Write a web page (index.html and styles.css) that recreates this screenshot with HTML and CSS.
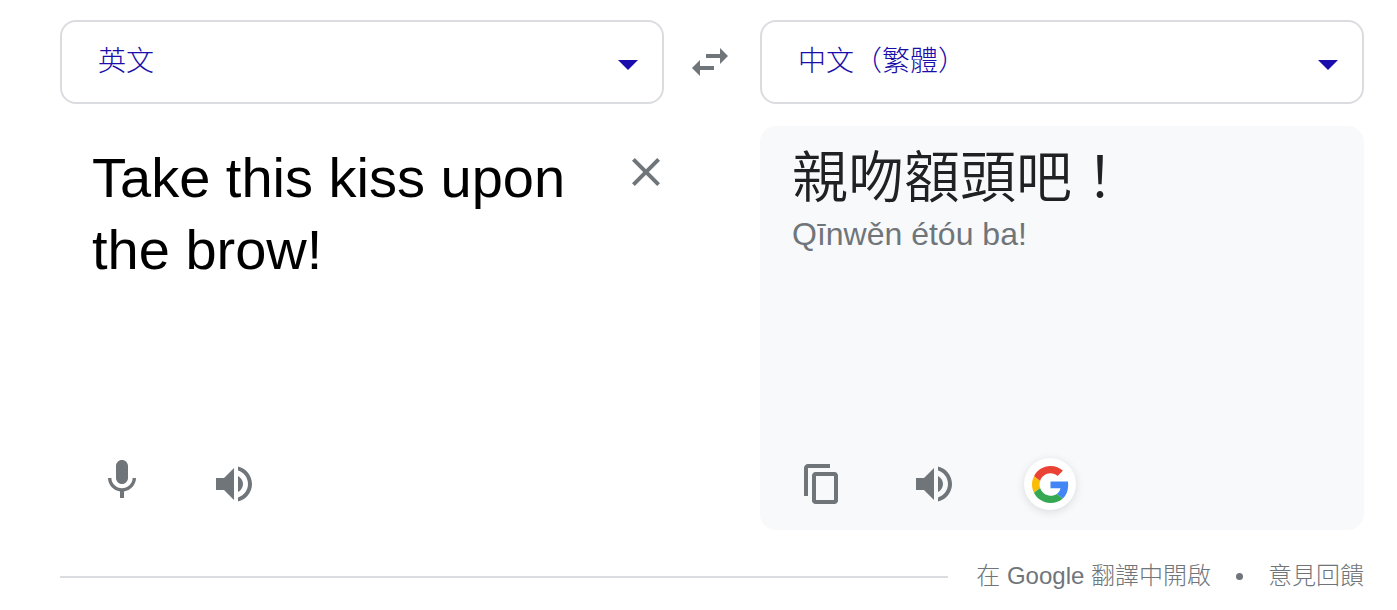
FILE: index.html
```html
<!DOCTYPE html>
<html lang="zh-Hant">
<head>
<meta charset="utf-8">
<meta name="viewport" content="width=device-width, initial-scale=1">
<title>翻譯</title>
<link rel="stylesheet" href="styles.css">
</head>
<body>
<main class="translator">
  <div class="columns">
    <div class="language">
      <select class="language-select" aria-label="來源語言"><option>英文</option></select>
    </div>
    <button class="icon-button swap" type="button" aria-label="交換語言">
      <svg class="icon" viewBox="0 0 24 24"><path d="M6.99 11L3 15l3.99 4v-3H14v-2H6.99v-3zM21 9l-3.99-4v3H10v2h7.01v3L21 9z"/></svg>
    </button>
    <div class="language">
      <select class="language-select" aria-label="目標語言"><option>中文（繁體）</option></select>
    </div>

    <section class="panel source">
      <div class="entry">
        <textarea class="source-text" aria-label="原文" rows="2" spellcheck="false">Take this kiss upon the brow!</textarea>
        <button class="icon-button clear" type="button" aria-label="清除">
          <svg class="icon" viewBox="0 0 24 24"><path d="M19 6.41L17.59 5 12 10.59 6.41 5 5 6.41 10.59 12 5 17.59 6.41 19 12 13.41 17.59 19 19 17.59 13.41 12z"/></svg>
        </button>
      </div>
      <div class="actions">
        <button class="icon-button mic" type="button" aria-label="語音輸入">
          <svg class="icon" viewBox="0 0 24 24"><path d="M12 14c1.66 0 3-1.34 3-3V5c0-1.66-1.34-3-3-3S9 3.34 9 5v6c0 1.66 1.34 3 3 3zM17.3 11c0 3-2.54 5.1-5.3 5.1S6.7 14 6.7 11H5c0 3.41 2.72 6.23 6 6.72V21h2v-3.28c3.28-.48 6-3.3 6-6.72h-1.7z"/></svg>
        </button>
        <button class="icon-button" type="button" aria-label="聆聽原文">
          <svg class="icon" viewBox="0 0 24 24"><path d="M3 9v6h4l5 5V4L7 9H3zm13.5 3c0-1.77-1.02-3.29-2.5-4.03v8.05c1.48-.73 2.5-2.25 2.5-4.02zM14 3.23v2.06c2.89.86 5 3.54 5 6.71s-2.11 5.85-5 6.71v2.06c4.01-.91 7-4.49 7-8.77s-2.99-7.86-7-8.77z"/></svg>
        </button>
      </div>
    </section>

    <section class="panel target">
      <div>
        <p class="translation">親吻額頭吧！</p>
        <p class="pinyin">Qīnwěn étóu ba!</p>
      </div>
      <div class="actions">
        <button class="icon-button" type="button" aria-label="複製">
          <svg class="icon" viewBox="0 0 24 24"><path d="M16 2H5c-1.100 0-2 .9-2 2v14h2V4h11V2zm2.200 4H8.800C7.800 6 7 6.800 7 7.800v12.400c0 1 .8 1.800 1.800 1.800h9.400c1 0 1.800-.8 1.800-1.800V7.800c0-1-.8-1.800-1.800-1.800zM18 20H9V8h9v12z"/></svg>
        </button>
        <button class="icon-button" type="button" aria-label="聆聽譯文">
          <svg class="icon" viewBox="0 0 24 24"><path d="M3 9v6h4l5 5V4L7 9H3zm13.500 3c0-1.770-1.020-3.290-2.500-4.030v8.050c1.480-.73 2.500-2.250 2.500-4.020zM14 3.230v2.060c2.890.86 5 3.540 5 6.710s-2.110 5.850-5 6.710v2.060c4.010-.91 7-4.490 7-8.770s-2.990-7.860-7-8.770z"/></svg>
        </button>
        <button class="google-button" type="button" aria-label="Google 搜尋">
          <svg class="google-logo" viewBox="0 0 48 48"><path fill="#ea4335" d="M24 9.500c3.540 0 6.710 1.220 9.210 3.600l6.850-6.850C35.900 2.380 30.470 0 24 0 14.620 0 6.510 5.380 2.560 13.220l7.980 6.190C12.430 13.720 17.740 9.500 24 9.500z"/><path fill="#4285f4" d="M46.980 24.550c0-1.570-.15-3.090-.38-4.550H24v9.020h12.940c-.58 2.960-2.260 5.480-4.780 7.180l7.730 6c4.510-4.180 7.090-10.360 7.090-17.650z"/><path fill="#fbbc05" d="M10.530 28.590c-.48-1.450-.76-2.990-.76-4.590s.27-3.140.76-4.590l-7.980-6.190C.92 16.460 0 20.120 0 24s.92 7.540 2.560 10.780l7.970-6.190z"/><path fill="#34a853" d="M24 48c6.480 0 11.930-2.130 15.890-5.810l-7.730-6c-2.150 1.450-4.920 2.300-8.160 2.300-6.260 0-11.570-4.220-13.470-9.910l-7.980 6.190C6.510 42.620 14.620 48 24 48z"/></svg>
        </button>
      </div>
    </section>
  </div>

  <footer class="footer">
    <hr class="rule">
    <a class="footer-link" href="#">在 Google 翻譯中開啟</a>
    <span class="dot"></span>
    <a class="footer-link" href="#">意見回饋</a>
  </footer>
</main>
</body>
</html>
```
FILE: styles.css
```css
* {
  box-sizing: border-box;
}

body {
  margin: 0;
  background: #fff;
  color: #202124;
  font-family: "Liberation Sans", "Noto Sans CJK TC", sans-serif;
  font-weight: 300;
}

button,
select,
textarea {
  border: 0;
  padding: 0;
  background: none;
  font: inherit;
}

p {
  margin: 0;
}

.translator {
  padding: 20px 33px 0 60px;
}

.columns {
  display: grid;
  grid-template-columns: minmax(0, 1fr) 96px minmax(0, 1fr);
  row-gap: 22px;
}

.language {
  position: relative;
}

.language::after {
  content: "";
  position: absolute;
  top: 40px;
  right: 26px;
  border: 10px solid transparent;
  border-top-color: #1a0dab;
  border-bottom: 0;
  pointer-events: none;
}

.language-select {
  appearance: none;
  display: block;
  width: 100%;
  height: 84px;
  padding: 0 64px 0 36px;
  border: 2px solid #dadce0;
  border-radius: 16px;
  color: #1a0dab;
  font-size: 28px;
  line-height: 40px;
}

.icon-button {
  flex: none;
  width: 48px;
  height: 48px;
  color: #70757a;
}

.icon {
  display: block;
  width: 48px;
  height: 48px;
  fill: currentColor;
}

.swap {
  place-self: center;
  margin-right: 4px;
}

.panel {
  display: flex;
  flex-direction: column;
  justify-content: space-between;
  min-height: 404px;
  padding: 16px 32px 20px;
  border-radius: 16px;
}

.source {
  grid-column: 1;
  padding-right: 0;
}

.target {
  grid-column: 3;
  background: #f8f9fb;
}

.entry {
  display: flex;
  align-items: flex-start;
  gap: 24px;
}

.source-text {
  flex: 1;
  min-width: 0;
  height: 144px;
  resize: none;
  overflow: hidden;
  color: #000;
  font-size: 56px;
  line-height: 72px;
}

.clear {
  margin: 6px -6px 0 0;
}

.translation {
  font-size: 56px;
  font-weight: 350;
  line-height: 72px;
}

.pinyin {
  color: #70757a;
  font-size: 32px;
  line-height: 40px;
}

.actions {
  display: flex;
  align-items: center;
  gap: 64px;
  height: 52px;
  padding-left: 6px;
}

.mic {
  margin-top: -8px;
}

.google-button {
  display: grid;
  place-items: center;
  width: 52px;
  height: 52px;
  margin-left: 2px;
  border-radius: 50%;
  background: #fff;
  box-shadow: 0 2px 10px rgba(0, 0, 0, 0.12);
}

.google-logo {
  width: 37px;
  height: 37px;
}

.footer {
  display: flex;
  align-items: center;
  margin-top: 28px;
  line-height: 36px;
  font-size: 24px;
}

.rule {
  flex: 1;
  height: 2px;
  margin: 2px 28px 0 0;
  border: 0;
  background: #dadce0;
}

.footer-link {
  color: #70757a;
  text-decoration: none;
}

.dot {
  width: 7px;
  height: 7px;
  margin: 0 25px;
  border-radius: 50%;
  background: #70757a;
}
```
